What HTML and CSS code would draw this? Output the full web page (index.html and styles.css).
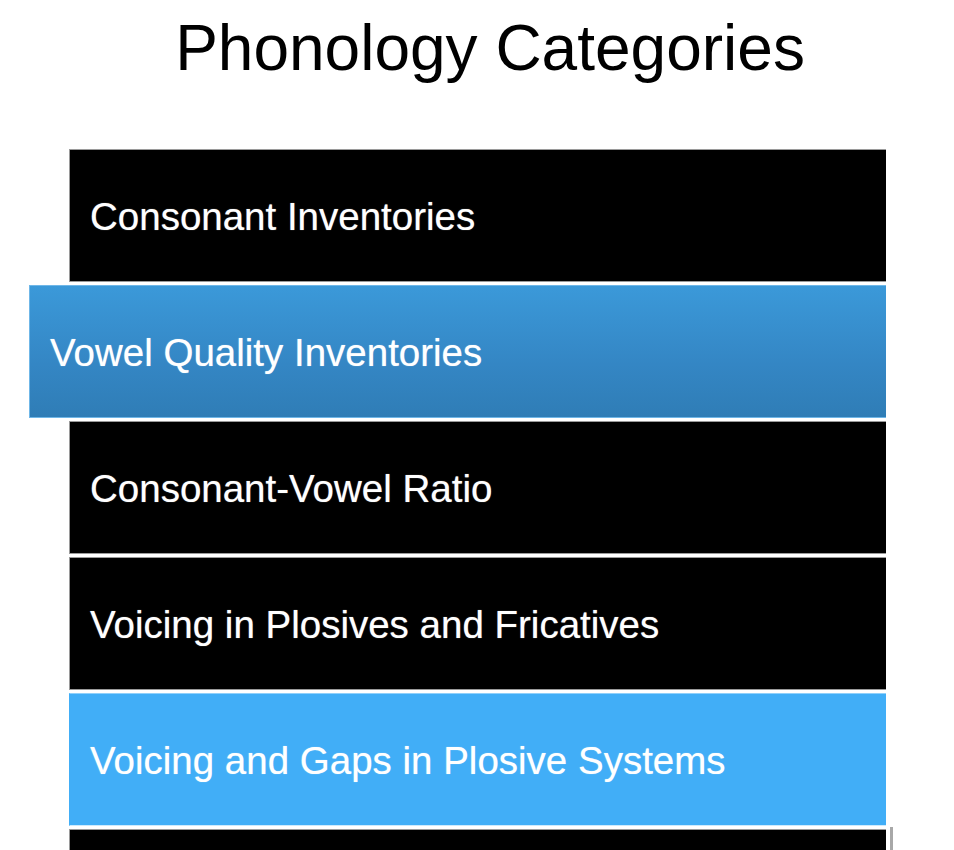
FILE: index.html
```html
<!DOCTYPE html>
<html lang="en">
<head>
<meta charset="utf-8">
<title>Phonology Categories</title>
<link rel="stylesheet" href="styles.css">
</head>
<body>
<h1 class="title">Phonology Categories</h1>
<ul class="cats">
  <li class="cat">Consonant Inventories</li>
  <li class="cat cat-active">Vowel Quality Inventories</li>
  <li class="cat">Consonant-Vowel Ratio</li>
  <li class="cat">Voicing in Plosives and Fricatives</li>
  <li class="cat cat-hover">Voicing and Gaps in Plosive Systems</li>
  <li class="cat cat-last"></li>
</ul>
</body>
</html>
```
FILE: styles.css
```css
html, body {
  margin: 0;
  padding: 0;
  background: #ffffff;
}
body {
  font-family: "Liberation Sans", Arial, Helvetica, sans-serif;
}
.title {
  margin: 11px 0 64px 0;
  padding-left: 26px;
  font-size: 64px;
  line-height: 74px;
  font-weight: normal;
  color: #000;
  text-align: center;
}
.cats {
  list-style: none;
  margin: 0 0 0 69px;
  padding: 0;
  width: 817px;
}
.cat {
  position: relative;
  box-sizing: border-box;
  display: flex;
  align-items: center;
  height: 133px;
  margin-bottom: 3px;
  padding: 3px 0 0 20px;
  background: #000;
  color: #fff;
  font-size: 38.5px;
  text-shadow: 0 0 1px rgba(255, 255, 255, 0.6);
  border-top: 1px solid #9a9a9a;
  border-left: 1px solid #9a9a9a;
  border-bottom: 1px solid #9a9a9a;
}
.cat-active {
  margin-left: -40px;
  background: linear-gradient(to bottom, #3b99d9 0%, #3486c4 60%, #2f7db6 100%);
  border-top: 1px solid #6fb7e8;
  border-left: 1px solid #6fb7e8;
  border-bottom: 1px solid #6fb7e8;
}
.cat-hover {
  background: #41aef7;
  border-top: 1px solid #8fd0fb;
  border-left: 1px solid #41aef7;
  border-bottom: 1px solid #cdeafd;
}
.cat-last::after {
  content: "";
  position: absolute;
  right: -7px;
  top: -3px;
  width: 3px;
  height: 40px;
  background: #a8a8a8;
}
```
